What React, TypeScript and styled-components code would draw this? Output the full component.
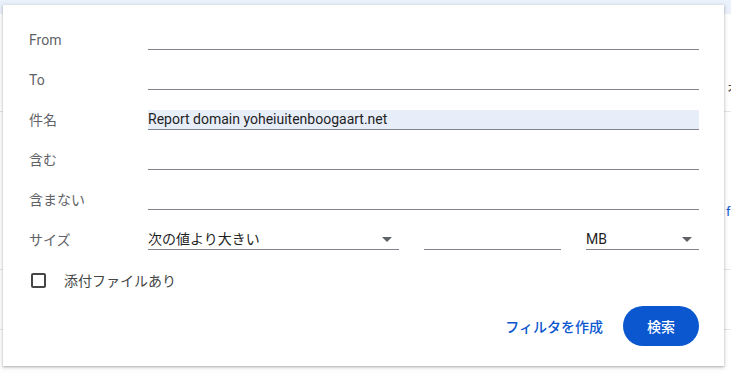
import React from "react";
import styled, { createGlobalStyle } from "styled-components";

const GlobalStyle = createGlobalStyle`
    html, body {
        margin: 0;
        padding: 0;
        background: #ffffff;
        font-family: Roboto, "Noto Sans CJK JP", "Liberation Sans", sans-serif;
    }
`;

const Page = styled.div`
    position: relative;
    width: 731px;
    height: 373px;
    overflow: hidden;
    background: #ffffff;
`;

const TopBand = styled.div`
    height: 14px;
    background: #eaf1fb;
`;

// mail list rows behind the dropdown, only their right edge shows
const ListRow = styled.div<{ $h: number; $top?: number }>`
    height: ${(p) => p.$h}px;
    box-sizing: border-box;
    padding-top: ${(p) => p.$top ?? 0}px;
    border-bottom: 1px solid #e6e6e6;
    display: flex;
    align-items: flex-start;
    justify-content: flex-end;
    font-size: 13px;
    line-height: 16px;
    color: #444746;
`;

const Peek = styled.span<{ $blue?: boolean }>`
    width: 5px;
    overflow: hidden;
    white-space: nowrap;
    color: ${(p) => (p.$blue ? "#0b57d0" : "#444746")};
`;

const Dialog = styled.div`
    position: absolute;
    left: 3px;
    top: 5px;
    width: 721px;
    height: 361px;
    box-sizing: border-box;
    padding: 5px 25px 0 26px;
    background: #ffffff;
    box-shadow: 0 1px 2px rgba(60, 64, 67, 0.3), 0 1px 4px 1px rgba(60, 64, 67, 0.15);
`;

const Row = styled.div`
    display: flex;
    align-items: flex-end;
    height: 40px;
`;

const Label = styled.div`
    width: 119px;
    flex-shrink: 0;
    font-size: 14px;
    line-height: 20px;
    color: #5f6368;
`;

const Field = styled.div<{ $filled?: boolean }>`
    flex: 1;
    height: 20px;
    box-sizing: border-box;
    border-bottom: 1px solid #80868b;
    background: ${(p) => (p.$filled ? "#e8eef9" : "transparent")};
    font-size: 14px;
    line-height: 19px;
    color: #1f1f1f;
    white-space: nowrap;
`;

const SizeGroup = styled.div`
    flex: 1;
    display: flex;
    gap: 25px;
`;

const Select = styled.div<{ $w: number }>`
    width: ${(p) => p.$w}px;
    height: 20px;
    box-sizing: border-box;
    border-bottom: 1px solid #80868b;
    display: flex;
    align-items: center;
    justify-content: space-between;
    font-size: 14px;
    line-height: 19px;
    color: #1f1f1f;
`;

const Arrow = styled.span`
    width: 0;
    height: 0;
    margin-right: 7px;
    border-left: 5px solid transparent;
    border-right: 5px solid transparent;
    border-top: 5px solid #5f6368;
`;

const Input = styled.div<{ $w: number }>`
    width: ${(p) => p.$w}px;
    height: 20px;
    box-sizing: border-box;
    border-bottom: 1px solid #80868b;
`;

const CheckRow = styled.div`
    display: flex;
    align-items: center;
    height: 40px;
    margin-top: 10px;
    padding-left: 2px;
    gap: 18px;
    font-size: 14px;
    color: #444746;
`;

const Box = styled.span`
    width: 15px;
    height: 15px;
    box-sizing: border-box;
    border: 2px solid #444746;
    border-radius: 2px;
`;

const Actions = styled.div`
    display: flex;
    justify-content: flex-end;
    align-items: center;
    gap: 20px;
    margin-top: 6px;
    height: 40px;
`;

const TextButton = styled.button`
    border: none;
    background: none;
    padding: 0;
    font-family: inherit;
    font-size: 14px;
    font-weight: 500;
    color: #0b57d0;
`;

const PrimaryButton = styled.button`
    width: 76px;
    height: 40px;
    border: none;
    border-radius: 20px;
    background: #0b57d0;
    color: #ffffff;
    font-family: inherit;
    font-size: 14px;
    font-weight: 500;
`;

const fields = [
    { label: "From", value: "" },
    { label: "To", value: "" },
    { label: "件名", value: "Report domain yoheiuitenboogaart.net" },
    { label: "含む", value: "" },
    { label: "含まない", value: "" },
];

const App: React.FC = () => {
    return (
        <Page>
            <GlobalStyle />
            <TopBand />
            <ListRow $h={98} $top={65}>
                <Peek>ォ</Peek>
            </ListRow>
            <ListRow $h={158} $top={92}>
                <Peek $blue>f</Peek>
            </ListRow>
            <ListRow $h={60} />
            <Dialog>
                {fields.map((f) => (
                    <Row key={f.label}>
                        <Label>{f.label}</Label>
                        <Field $filled={f.value !== ""}>{f.value}</Field>
                    </Row>
                ))}
                <Row>
                    <Label>サイズ</Label>
                    <SizeGroup>
                        <Select $w={251}>
                            次の値より大きい
                            <Arrow />
                        </Select>
                        <Input $w={137} />
                        <Select $w={113}>
                            MB
                            <Arrow />
                        </Select>
                    </SizeGroup>
                </Row>
                <CheckRow>
                    <Box />
                    添付ファイルあり
                </CheckRow>
                <Actions>
                    <TextButton>フィルタを作成</TextButton>
                    <PrimaryButton>検索</PrimaryButton>
                </Actions>
            </Dialog>
        </Page>
    );
};

export default App;
